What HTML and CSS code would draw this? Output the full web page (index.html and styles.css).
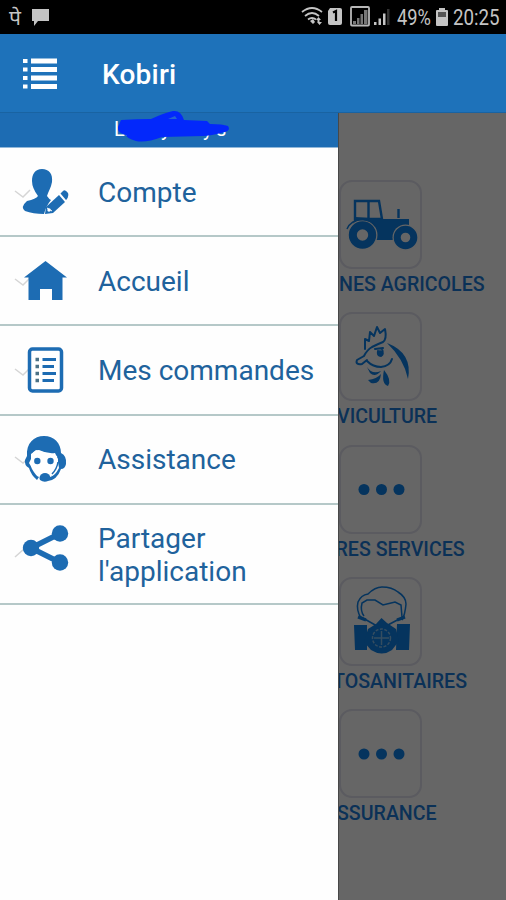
FILE: index.html
```html
<!DOCTYPE html>
<html lang="fr">
<head>
<meta charset="utf-8">
<title>Kobiri</title>
<link rel="stylesheet" href="styles.css">
</head>
<body>
<div class="status">
  <span class="hindi">पे</span>
  <svg class="chat" width="18" height="18" viewBox="32 8 18 18"><path d="M32 9H49V21H38L34 26V21H32Z"/></svg>
  <svg class="signals" width="90" height="26" viewBox="300 4 90 26">
    <g fill="none" stroke="#c4c4c4" stroke-width="1.8"><path d="M302 12Q312 4 322 12M305 16Q312 10 319 16M308 19.500Q312 16.500 316 19.500"/></g>
    <path d="M310 21L313 19L315 22L313 24ZM316 20L318.500 17L321 20H319.500V22H317.500V20ZM317 22H322L319.500 25Z" />
    <path d="M330 8H340Q342 8 342 10V23Q342 25 340 25H330Q328 25 328 23V11Z"/>
    <path d="M333 12.500L336 11V21" fill="none" stroke="#000" stroke-width="2.200"/>
    <rect x="351" y="7" width="18" height="18.500" rx="1" fill="none" stroke="#b8b8b8" stroke-width="1.800"/>
    <path d="M353 24H356V21H353ZM357 24H359.500V18H357ZM360.500 24H363V14H360.500ZM364 24H367.500V10H364Z" fill="#777"/>
    <path d="M374 25H376.500V22H374ZM378.500 25H381V18.500H378.500ZM383 25H385.500V13.500H383Z"/>
    <path d="M387 25H389.500V9H387Z" fill="#333"/>
  </svg>
  <span class="pct">49%</span>
  <svg class="battery" width="12" height="18" viewBox="436 7 12 18"><path d="M439 7H445V9H447Q448 9 448 10V24Q448 25 447 25H437Q436 25 436 24V10Q436 9 437 9H439Z"/><path d="M438 11H446V16H438Z" fill="#555"/></svg>
  <span class="clock">20:25</span>
</div>
<header class="bar">
  <svg class="burger" width="36" height="32" viewBox="22 58 36 32"><path d="M31 58.500H57V63.500H31ZM31 67H57V72H31ZM31 75.500H57V80.500H31ZM31 84H57V89H31ZM23 59H27.500V63H23ZM23 67.500H27.500V71.500H23ZM23 76H27.500V80H23ZM23 84.500H27.500V88.500H23Z"/></svg>
  <h1>Kobiri</h1>
</header>
<div class="content">
  <nav class="drawer">
    <div class="user">
      <span class="name">L.</span><span class="tail">y</span><span class="tail">y</span><span class="tail">s</span>
      <svg class="scribble" width="120" height="34" viewBox="112 110 120 34"><path d="M121 120Q137 119 151 119Q164 113 173 111Q181 110 184 120L207 121L210 124Q223 124 228 126Q231 130 225 132Q210 136 203 136L162 137Q146 143 136 141Q126 138 126 135Q117 133 118 127Z"/><path d="M168 119L175 116L177 119Z" class="gap"/></svg>
    </div>
    <a class="item">
      <svg width="98" height="88" viewBox="0 148 98 88"><path class="tick" d="M15 191L23 197L30 190"/><path d="M42 169C49 169 53 174 52 182C51 188 48 192 47 196Q49 199 51 200Q46 206 44 214Q33 214 25 211Q20 207 27 201Q36 199 38 196Q32 188 32 181C32 174 35 169 42 169Z"/><path d="M46 207L59 195L65 202L53 213L45 214Z"/><path d="M60.500 193.500L63 191Q65 189 68 193Q69 195 67 199L66 200Z"/><path d="M47 208L52 211" class="cut"/><circle cx="49" cy="210" r="1.700" fill="#fff"/></svg>
      <span>Compte</span>
    </a>
    <a class="item">
      <svg width="98" height="88" viewBox="0 237 98 88"><path class="tick" d="M15 279L23 285L30 278"/><path d="M45.500 261L67 277.500H62.500V300H52V289H40V300H28.500V277.500H24Z"/></svg>
      <span>Accueil</span>
    </a>
    <a class="item">
      <svg width="98" height="88" viewBox="0 326 98 88"><path class="tick" d="M15 369L23 375L30 368"/><rect x="29.500" y="349" width="32" height="42" rx="3" fill="#fff" stroke="#1d6cb3" stroke-width="3.500"/><path d="M42.500 359.500H56M42.500 366.500H54M42.500 373.500H56M42.500 380.500H54" fill="none" stroke="#1d6cb3" stroke-width="3"/><path d="M35.500 359.500H39M35.500 366.500H39M35.500 373.500H39M35.500 380.500H39" fill="none" stroke="#4b7185" stroke-width="3.500"/></svg>
      <span>Mes commandes</span>
    </a>
    <a class="item">
      <svg width="98" height="88" viewBox="0 415 98 88"><path class="tick" d="M15 457L23 463L30 457"/><path d="M27 456C26 443 34 436 44 436C54 436 61 443 61 453Q67 456 66 464Q65 469 61 469Q57 480 48 481Q44 483 40 480Q38 476 43 474Q49 472 50 477Q55 476 59 468L57 456Q49 454 43 452L36 450Q31 453 31 459L29 463Q31 466 32 469Q36 476 39 477L37 480Q31 475 29 468Q24 465 25 460Z"/><path d="M57 457L56 468L51 475" fill="none" stroke="#1d6cb3" stroke-width="2"/><path d="M31 454Q36 450 39 450Q47 454 55 453L58 459V467Q54 476 50 476Q45 471 39 476Q34 472 31 465Z" fill="#fff"/><path d="M58 462Q57 469 52 474" fill="none" stroke="#1d6cb3" stroke-width="1.500"/><circle cx="37.300" cy="461" r="3.200"/><circle cx="50.500" cy="461" r="3.200"/><ellipse cx="45" cy="477" rx="5" ry="4"/></svg>
      <span>Assistance</span>
    </a>
    <a class="item tall">
      <svg width="98" height="88" viewBox="0 510 98 88"><path class="tick" d="M15 557L24 549"/><path d="M60 533.500L31 548L60 562.500" fill="none" stroke="#1d6cb3" stroke-width="5.500"/><circle cx="60" cy="533.500" r="8.200"/><circle cx="31" cy="548" r="8.200"/><circle cx="60" cy="562.500" r="8.200"/></svg>
      <span>Partager<br>l'application</span>
    </a>
  </nav>
  <main class="services">
    <section class="service">
      <div class="tile"><svg width="78" height="85" viewBox="341 183 78 85"><path d="M354 202H378L381 220H354Z" fill="none" stroke="#05345e" stroke-width="2.400"/><path d="M367.500 202V220M397.500 219V210" fill="none" stroke="#05345e" stroke-width="2.400"/><path d="M354 218L382 220L408 220V230L397 241H374L351 228Z"/><circle cx="361.500" cy="236" r="15" class="wheel-gap"/><circle cx="404.500" cy="238.500" r="13" class="wheel-gap"/><circle cx="361.500" cy="236" r="9.700" class="wheel"/><circle cx="404.500" cy="238.500" r="8.300" class="wheel small"/><path d="M346 230Q350 221 361 220.500Q371 221 375 228" fill="none" stroke="#05345e" stroke-width="1.500"/></svg></div>
      <p>NES AGRICOLES</p>
    </section>
    <section class="service">
      <div class="tile"><svg width="78" height="85" viewBox="341 315 78 85"><g fill="none" stroke="#05345e" stroke-width="2" stroke-linecap="round" stroke-linejoin="round"><path d="M364 350L364 340L368 342L369 333L373 337L376 328L379 334L384 330Q386 340 382 343Q377 345 371 348Q366 351 363 357L356 361Q354 366 361 365L366 361"/><path d="M366 362Q372 368 380 368Q389 367 391 360M374 350L382 349M377 352Q376 357 380 357Q383 355 381 350"/></g><path d="M386 344Q412 354 407 380Q403 360 386 344ZM366 368Q371 376 380 372Q374 379 369 374ZM367 381Q376 380 380 375Q379 386 370 384ZM383 371Q391 381 387 387Q380 385 383 371Z"/><circle cx="379" cy="354" r="2.700"/></svg></div>
      <p class="clip-s">VICULTURE</p>
    </section>
    <section class="service">
      <div class="tile"><svg width="78" height="85" viewBox="341 448 78 85"><circle cx="363" cy="490.500" r="5.500"/><circle cx="380.500" cy="490.500" r="5.500"/><circle cx="398" cy="490.500" r="5.500"/></svg></div>
      <p class="clip-m">RES SERVICES</p>
    </section>
    <section class="service">
      <div class="tile"><svg width="78" height="85" viewBox="341 580 78 85"><path d="M360 619Q355 611 357 603Q360 596 367 595Q374 588 381 588Q391 588 397 593Q405 598 405 605Q404 616 401 621M363 617Q359 612 361 604L366 601L374 601L382 606L394 603L400 606L401 618M360 618L376 627M402 618L385 627" fill="none" stroke="#05345e" stroke-width="1.500"/><path d="M353 626H366V651H354ZM396 625H409L408 651H395Z"/><path d="M380.500 619L386 624L395 630L398 642L391 651Q381 658 370 651L363 643L367 630L375 625Z"/><circle cx="380.500" cy="639" r="9" fill="none" stroke="#354d60" stroke-width="1.500" stroke-dasharray="3 1.500"/><path d="M380.500 632V646M373 639H388" fill="none" stroke="#354d60" stroke-width="1.500"/><path d="M357 618L365 621M396 621L404 618" stroke="#05345e" stroke-width="3"/></svg></div>
      <p class="clip-l">TOSANITAIRES</p>
    </section>
    <section class="service">
      <div class="tile"><svg width="78" height="85" viewBox="341 712 78 85"><circle cx="363" cy="755" r="5.500"/><circle cx="380.500" cy="755" r="5.500"/><circle cx="398" cy="755" r="5.500"/></svg></div>
      <p class="clip-s">SSURANCE</p>
    </section>
  </main>
</div>
</body>
</html>
```
FILE: styles.css
```css
* { box-sizing: border-box; }
body {
  margin: 0;
  width: 506px;
  height: 900px;
  overflow: hidden;
  display: flex;
  flex-direction: column;
  font-family: Roboto, "Liberation Sans", sans-serif;
  background: #666;
}
svg { display: block; flex: none; }

.status {
  height: 34px;
  flex: none;
  display: flex;
  align-items: center;
  background: #000;
  color: #c4c4c4;
  fill: #c4c4c4;
  padding-left: 9px;
}
.hindi { width: 23px; font: 21px/30px "Noto Sans", sans-serif; }
.signals { margin-left: 250px; }
.pct, .clock { font-size: 22px; line-height: 34px; white-space: nowrap; transform-origin: left center; }
.pct { width: 39px; margin-left: 7px; padding-top: 1px; transform: scaleX(.83); }
.clock { width: 48px; margin-left: 5px; padding-top: 1px; transform: scaleX(.85); }

.bar {
  height: 79px;
  flex: none;
  display: flex;
  align-items: center;
  padding: 2px 0 0 22px;
  background: #1e72ba;
  border-bottom: 1px solid #1963a2;
  color: #fff;
  fill: #fff;
}
.bar h1 { margin: 0 0 0 44px; padding-top: 1px; font-size: 28px; font-weight: 500; line-height: 32px; letter-spacing: .2px; }

.content { flex: 1; display: flex; min-height: 0; }
.drawer {
  width: 339px;
  flex: none;
  background: #fefefe;
  border-right: 1px solid #484848;
}
.user {
  position: relative;
  height: 35px;
  display: flex;
  padding: 4px 0 0 114px;
  background: #1d6cb3;
  border-bottom: 1px solid #92b8d9;
  color: #fff;
  font-size: 20px;
  line-height: 24px;
}
.name { width: 47px; }
.tail { width: 42px; }
.tail + .tail { width: 13px; }
.scribble { position: absolute; left: 112px; top: -3px; fill: #0328fb; }
.scribble .gap { fill: #2464d5; }
.item {
  height: 89.200px;
  display: flex;
  align-items: center;
  border-bottom: 2px solid #b5c8c8;
  color: #20629c;
  fill: #1d6cb3;
  font-size: 28px;
  line-height: 33px;
  white-space: nowrap;
}
.item span { padding-top: 1.500px; }
.item.tall { height: 100px; }
.tick { fill: none; stroke: #d5d5d5; stroke-width: 1.500; }
.cut { stroke: #fff; stroke-width: 1; }

.services {
  flex: 1;
  min-width: 0;
  padding-top: 67px;
  overflow: hidden;
  fill: #05345e;
}
.service { height: 132.300px; }
.tile {
  width: 83px;
  height: 89px;
  border: 2px solid #5b5b60;
  border-radius: 13px;
  display: flex;
  align-items: center;
  justify-content: center;
}
.service p {
  margin: 3px 0 0;
  color: #0b3157;
  font-size: 19.600px;
  font-weight: 500;
  line-height: 26px;
  white-space: nowrap;
}
.service .clip-s { margin-left: -2px; }
.service .clip-m { margin-left: -3.500px; }
.service .clip-l { margin-left: -6px; }
.wheel-gap { fill: #666; }
.wheel { fill: #666; stroke: #05345e; stroke-width: 8px; }
.wheel.small { stroke-width: 7px; }
```
